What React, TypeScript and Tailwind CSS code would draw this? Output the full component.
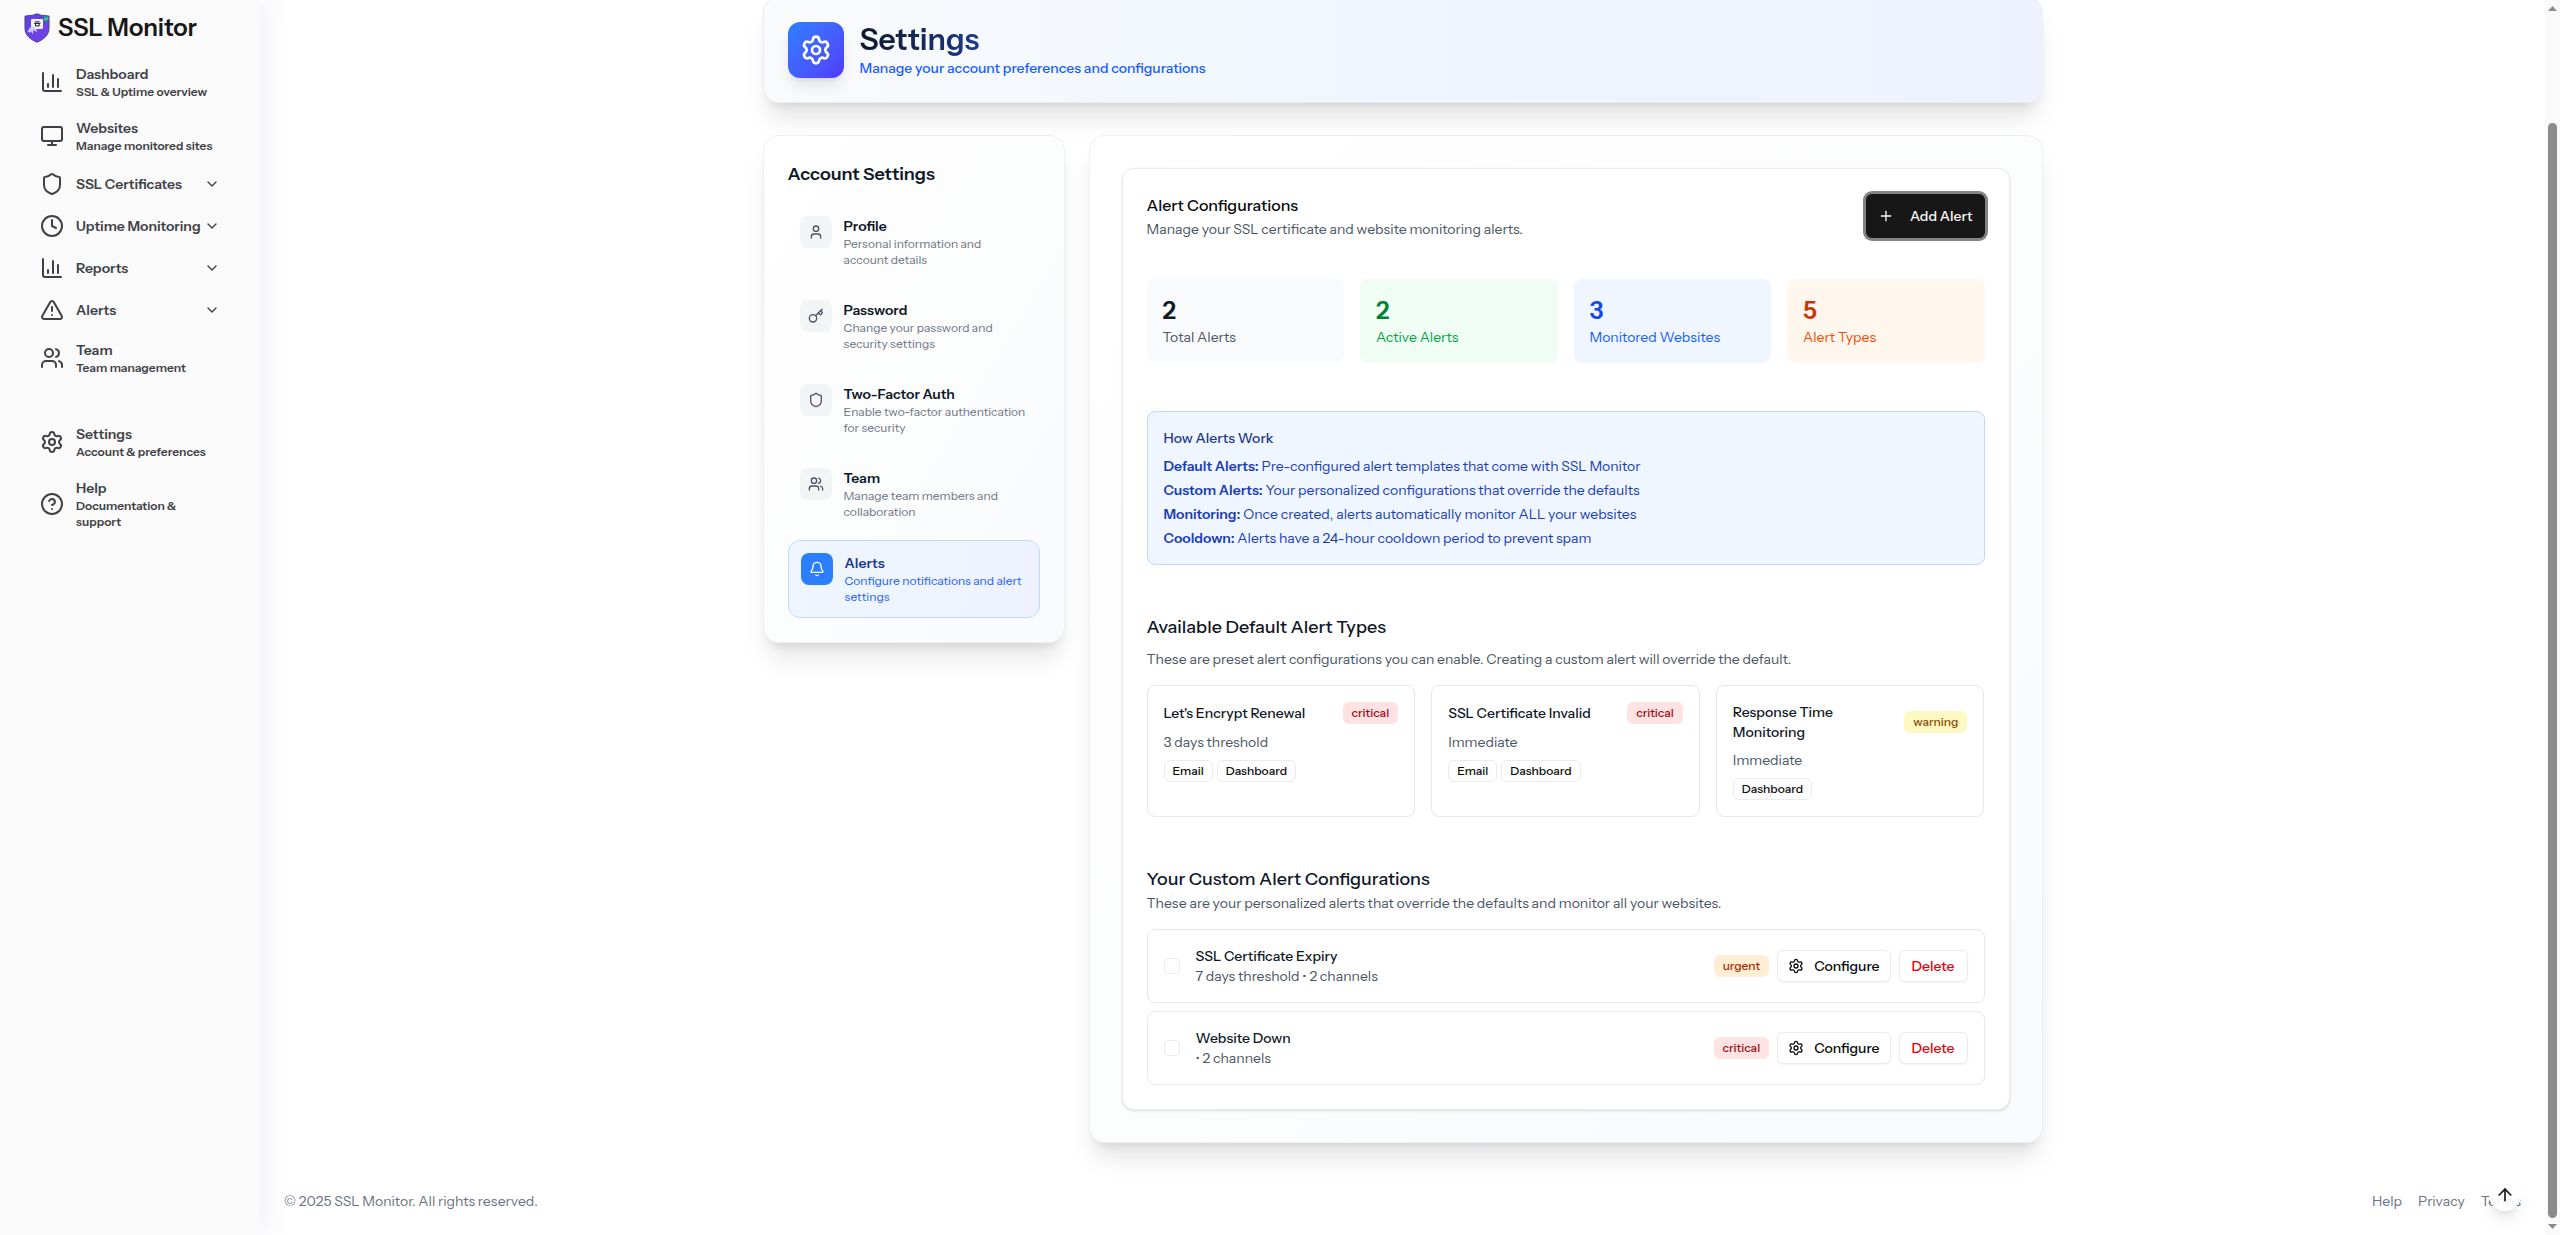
import type { ComponentType } from 'react';
import {
  ArrowUp,
  Bell,
  ChartColumn,
  ChevronDown,
  CircleQuestionMark,
  Clock,
  Key,
  Monitor,
  Plus,
  Settings,
  Shield,
  TriangleAlert,
  User,
  Users,
} from 'lucide-react';

type Icon = ComponentType<{ className?: string; strokeWidth?: number }>;

type NavEntry = { icon: Icon; title: string; sub?: string };

const primaryNav: NavEntry[] = [
  { icon: ChartColumn, title: 'Dashboard', sub: 'SSL & Uptime overview' },
  { icon: Monitor, title: 'Websites', sub: 'Manage monitored sites' },
  { icon: Shield, title: 'SSL Certificates' },
  { icon: Clock, title: 'Uptime Monitoring' },
  { icon: ChartColumn, title: 'Reports' },
  { icon: TriangleAlert, title: 'Alerts' },
  { icon: Users, title: 'Team', sub: 'Team management' },
];

const secondaryNav: NavEntry[] = [
  { icon: Settings, title: 'Settings', sub: 'Account & preferences' },
  { icon: CircleQuestionMark, title: 'Help', sub: 'Documentation & support' },
];

const settingsNav = [
  { icon: User, title: 'Profile', text: 'Personal information and account details' },
  { icon: Key, title: 'Password', text: 'Change your password and security settings' },
  { icon: Shield, title: 'Two-Factor Auth', text: 'Enable two-factor authentication for security' },
  { icon: Users, title: 'Team', text: 'Manage team members and collaboration' },
  { icon: Bell, title: 'Alerts', text: 'Configure notifications and alert settings', active: true },
];

const stats = [
  { value: 2, label: 'Total Alerts', box: 'bg-gray-50', number: 'text-gray-900', text: 'text-gray-600' },
  { value: 2, label: 'Active Alerts', box: 'bg-green-50', number: 'text-green-700', text: 'text-green-600' },
  { value: 3, label: 'Monitored Websites', box: 'bg-blue-50', number: 'text-blue-700', text: 'text-blue-600' },
  { value: 5, label: 'Alert Types', box: 'bg-orange-50', number: 'text-orange-700', text: 'text-orange-600' },
];

const facts = [
  ['Default Alerts:', 'Pre-configured alert templates that come with SSL Monitor'],
  ['Custom Alerts:', 'Your personalized configurations that override the defaults'],
  ['Monitoring:', 'Once created, alerts automatically monitor ALL your websites'],
  ['Cooldown:', 'Alerts have a 24-hour cooldown period to prevent spam'],
];

const defaults = [
  { title: "Let's Encrypt Renewal", level: 'critical', when: '3 days threshold', channels: ['Email', 'Dashboard'] },
  { title: 'SSL Certificate Invalid', level: 'critical', when: 'Immediate', channels: ['Email', 'Dashboard'] },
  { title: 'Response Time Monitoring', level: 'warning', when: 'Immediate', channels: ['Dashboard'] },
];

const customs = [
  { id: 'ssl-expiry', title: 'SSL Certificate Expiry', detail: '7 days threshold • 2 channels', level: 'urgent' },
  { id: 'website-down', title: 'Website Down', detail: '• 2 channels', level: 'critical' },
];

const levelStyle: Record<string, string> = {
  critical: 'border-transparent bg-red-100 text-red-800',
  warning: 'border-transparent bg-yellow-100 text-yellow-800',
  urgent: 'border-transparent bg-orange-100 text-orange-800',
  channel: 'border-[#ebebeb] bg-white text-neutral-950',
};

function Badge({ kind, children }: { kind: string; children: string }) {
  return (
    <span className={`shrink-0 rounded-md border px-2 py-0.5 text-xs font-medium ${levelStyle[kind]}`}>
      {children}
    </span>
  );
}

function Logo() {
  return (
    <svg viewBox="0 0 26 30" className="h-[30px] w-[26px] shrink-0" aria-hidden="true">
      <defs>
        <linearGradient id="shield" x1="0" y1="0" x2="1" y2="1">
          <stop offset="0" stopColor="#5b43e0" />
          <stop offset="1" stopColor="#7440ee" />
        </linearGradient>
      </defs>
      <path
        d="M13 .8 17 2.2l8 .9v12.4c0 6.2-5 10.9-12 13.700C6 26.400 1 21.700 1 15.500V3.100l8-.9z"
        fill="url(#shield)"
        stroke="#4c3f8f"
        strokeWidth="1"
      />
      <rect x="7" y="6" width="12" height="10" rx="1" fill="#f3f1fd" />
      <path d="M11 8.800h4.500M10 10.300h6.500" stroke="#1f2937" strokeWidth="1" />
      <rect x="11.500" y="10.500" width="3.600" height="2.400" fill="none" stroke="#1f2937" strokeWidth="1" />
      <path d="M3 19.500 5 16l2-2.500 3 .5 2.500 2 .5 3-2-1-1.500-1L9 21.500l-1.500-3L6 20l-1-1.500z" fill="#cfc6fa" />
      <circle cx="22" cy="5.700" r="2.700" fill="#10a981" />
      <path d="m20.800 5.700 1 1 1.600-2" fill="none" stroke="#d1fae5" strokeWidth=".8" />
    </svg>
  );
}

function NavItem({ entry }: { entry: NavEntry }) {
  const Glyph = entry.icon;
  const body = (
    <>
      <Glyph className="size-6 shrink-0" />
      <span className="min-w-0 flex-1 text-left">
        <span className="block whitespace-nowrap text-sm font-semibold">{entry.title}</span>
        {entry.sub && <span className="block text-xs font-semibold">{entry.sub}</span>}
      </span>
    </>
  );
  return (
    <li>
      {entry.sub ? (
        <a href="#" className="flex items-center gap-3 p-2">
          {body}
        </a>
      ) : (
        <button type="button" className="flex w-full items-center gap-3 p-2">
          {body}
          <ChevronDown className="size-4 shrink-0" />
        </button>
      )}
    </li>
  );
}

function Sidebar() {
  return (
    <aside className="z-10 w-[260px] shrink-0 bg-neutral-50 text-zinc-700 shadow-[5px_0_25px_0_rgba(94,92,154,0.1)]">
      <a href="#" className="flex items-center gap-2 px-6 pt-3 text-2xl font-semibold text-neutral-900">
        <Logo />
        SSL Monitor
      </a>
      <nav aria-label="Main" className="px-8 pt-3">
        <ul className="space-y-0.5">
          {primaryNav.map((entry) => (
            <NavItem key={entry.title} entry={entry} />
          ))}
        </ul>
        <ul className="mt-8 space-y-0.5">
          {secondaryNav.map((entry) => (
            <NavItem key={entry.title} entry={entry} />
          ))}
        </ul>
      </nav>
    </aside>
  );
}

function PageHeader() {
  return (
    <header className="flex items-center gap-4 rounded-2xl border border-gray-200/60 bg-linear-to-r from-gray-50 via-blue-50 to-indigo-50 p-6 shadow-xl">
      <div className="flex size-14 items-center justify-center rounded-xl bg-linear-to-br from-blue-500 to-indigo-600 text-white shadow-lg">
        <Settings className="size-8" />
      </div>
      <div>
        <h1 className="w-fit bg-linear-to-r from-gray-900 to-blue-900 bg-clip-text text-3xl font-semibold text-transparent">
          Settings
        </h1>
        <p className="text-sm font-medium text-blue-600">Manage your account preferences and configurations</p>
      </div>
    </header>
  );
}

function SettingsMenu() {
  return (
    <aside className="self-start rounded-2xl border border-gray-200/60 bg-linear-to-br from-white to-gray-50 p-6 shadow-xl">
      <h2 className="text-lg font-semibold text-gray-900">Account Settings</h2>
      <nav aria-label="Account settings" className="mt-4 flex flex-col gap-2">
        {settingsNav.map(({ icon: Glyph, title, text, active }) => (
          <a
            key={title}
            href="#"
            className={
              active
                ? 'flex items-start gap-3 rounded-xl border border-blue-200 bg-linear-to-r from-blue-50 to-indigo-50 p-3'
                : 'flex items-start gap-3 rounded-xl p-3'
            }
          >
            <span
              className={
                active
                  ? 'flex size-8 shrink-0 items-center justify-center rounded-lg bg-blue-500 text-white'
                  : 'flex size-8 shrink-0 items-center justify-center rounded-lg bg-gray-100 text-gray-600'
              }
            >
              <Glyph className="size-4" />
            </span>
            <span>
              <span className={active ? 'block text-sm font-semibold text-blue-900' : 'block text-sm font-semibold text-gray-900'}>
                {title}
              </span>
              <span className={active ? 'block text-xs text-blue-600' : 'block text-xs text-gray-500'}>{text}</span>
            </span>
          </a>
        ))}
      </nav>
    </aside>
  );
}

function AlertsPanel() {
  return (
    <div className="col-span-3 rounded-2xl border border-gray-200/60 bg-linear-to-br from-white to-gray-50 p-8 shadow-xl">
      <div className="rounded-xl border border-[#ebebeb] bg-white p-6 shadow-sm">
        <div className="flex items-center justify-between">
          <div>
            <h2 className="font-medium text-neutral-950">Alert Configurations</h2>
            <p className="mt-0.5 text-sm text-gray-600">Manage your SSL certificate and website monitoring alerts.</p>
          </div>
          <button
            type="button"
            className="flex h-11 items-center gap-4 rounded-md bg-neutral-900 px-3 text-sm font-medium text-neutral-50 ring-3 ring-[#838383]"
          >
            <Plus className="size-4" />
            Add Alert
          </button>
        </div>

        <div className="mt-10 grid grid-cols-4 gap-4">
          {stats.map((s) => (
            <div key={s.label} className={`rounded-lg p-4 ${s.box}`}>
              <div className={`text-2xl font-semibold ${s.number}`}>{s.value}</div>
              <div className={`text-sm ${s.text}`}>{s.label}</div>
            </div>
          ))}
        </div>

        <section className="mt-12 rounded-lg border border-blue-200 bg-blue-50 p-4 text-sm text-blue-800">
          <h3 className="font-medium text-blue-900">How Alerts Work</h3>
          <div className="mt-2 space-y-1">
            {facts.map(([name, text]) => (
              <p key={name}>
                <strong className="font-semibold">{name}</strong> {text}
              </p>
            ))}
          </div>
        </section>

        <section className="mt-12">
          <h3 className="text-lg font-medium text-gray-900">Available Default Alert Types</h3>
          <p className="mt-2 text-sm text-gray-600">
            These are preset alert configurations you can enable. Creating a custom alert will override the default.
          </p>
          <div className="mt-4 grid grid-cols-3 gap-4">
            {defaults.map((d) => (
              <article key={d.title} className="rounded-lg border border-gray-200 p-4">
                <div className="flex items-center justify-between gap-8">
                  <h4 className="text-sm font-medium text-gray-900">{d.title}</h4>
                  <Badge kind={d.level}>{d.level}</Badge>
                </div>
                <p className="mt-2 text-sm text-gray-600">{d.when}</p>
                <div className="mt-2 flex gap-1">
                  {d.channels.map((c) => (
                    <Badge key={c} kind="channel">
                      {c}
                    </Badge>
                  ))}
                </div>
              </article>
            ))}
          </div>
        </section>

        <section className="mt-12">
          <h3 className="text-lg font-medium text-gray-900">Your Custom Alert Configurations</h3>
          <p className="text-sm text-gray-600">
            These are your personalized alerts that override the defaults and monitor all your websites.
          </p>
          <ul className="mt-4 space-y-2">
            {customs.map((c) => (
              <li key={c.id} className="flex items-center justify-between rounded-lg border border-gray-200 p-4">
                <div className="flex items-center gap-4">
                  <input
                    id={c.id}
                    type="checkbox"
                    className="size-4 appearance-none rounded-sm border border-[#ebebeb] bg-white"
                  />
                  <div className="text-sm">
                    <label htmlFor={c.id} className="block font-medium text-gray-900">
                      {c.title}
                    </label>
                    <p className="text-gray-600">{c.detail}</p>
                  </div>
                </div>
                <div className="flex items-center gap-2">
                  <Badge kind={c.level}>{c.level}</Badge>
                  <button
                    type="button"
                    className="flex h-8 items-center gap-2.5 rounded-md border border-[#ebebeb] bg-white px-2.5 text-sm font-medium text-neutral-950 shadow-xs"
                  >
                    <Settings className="size-4" />
                    Configure
                  </button>
                  <button
                    type="button"
                    className="flex h-8 items-center rounded-md border border-[#ebebeb] bg-white px-3 text-sm font-medium text-red-600 shadow-xs"
                  >
                    Delete
                  </button>
                </div>
              </li>
            ))}
          </ul>
        </section>
      </div>
    </div>
  );
}

function ScrollRail() {
  return (
    <div className="flex w-[15px] shrink-0 flex-col items-center bg-neutral-50 py-1.5 text-[#8b8b8b]" aria-hidden="true">
      <svg viewBox="0 0 9 5" className="h-[5px] w-[9px]" fill="currentColor">
        <path d="M4.500 0 9 5H0z" />
      </svg>
      <div className="flex w-full flex-1 flex-col items-center pb-1.5 pt-28">
        <div className="w-[9px] flex-1 rounded-full bg-[#8b8b8b]" />
      </div>
      <svg viewBox="0 0 9 5" className="h-[5px] w-[9px]" fill="currentColor">
        <path d="M0 0h9L4.500 5z" />
      </svg>
    </div>
  );
}

export default function App() {
  return (
    <div className="flex h-screen overflow-hidden bg-white font-['Instrument_Sans',Inter,sans-serif] text-neutral-950">
      <Sidebar />
      <div className="relative flex min-w-0 flex-1 flex-col justify-end">
        <main className="mx-auto w-full max-w-7xl pb-6">
          <PageHeader />
          <div className="mt-8 grid grid-cols-4 gap-6">
            <SettingsMenu />
            <AlertsPanel />
          </div>
        </main>
        <footer className="flex items-center justify-between p-6 text-sm text-gray-500">
          <p>© 2025 SSL Monitor. All rights reserved.</p>
          <nav aria-label="Footer" className="flex gap-4">
            <a href="#">Help</a>
            <a href="#">Privacy</a>
            <a href="#">Terms</a>
          </nav>
        </footer>
        <button
          type="button"
          aria-label="Scroll to top"
          className="absolute bottom-6 right-6 flex size-8 items-center justify-center rounded-full bg-white/90 text-neutral-900 shadow-lg"
        >
          <ArrowUp className="size-5" />
        </button>
      </div>
      <ScrollRail />
    </div>
  );
}
